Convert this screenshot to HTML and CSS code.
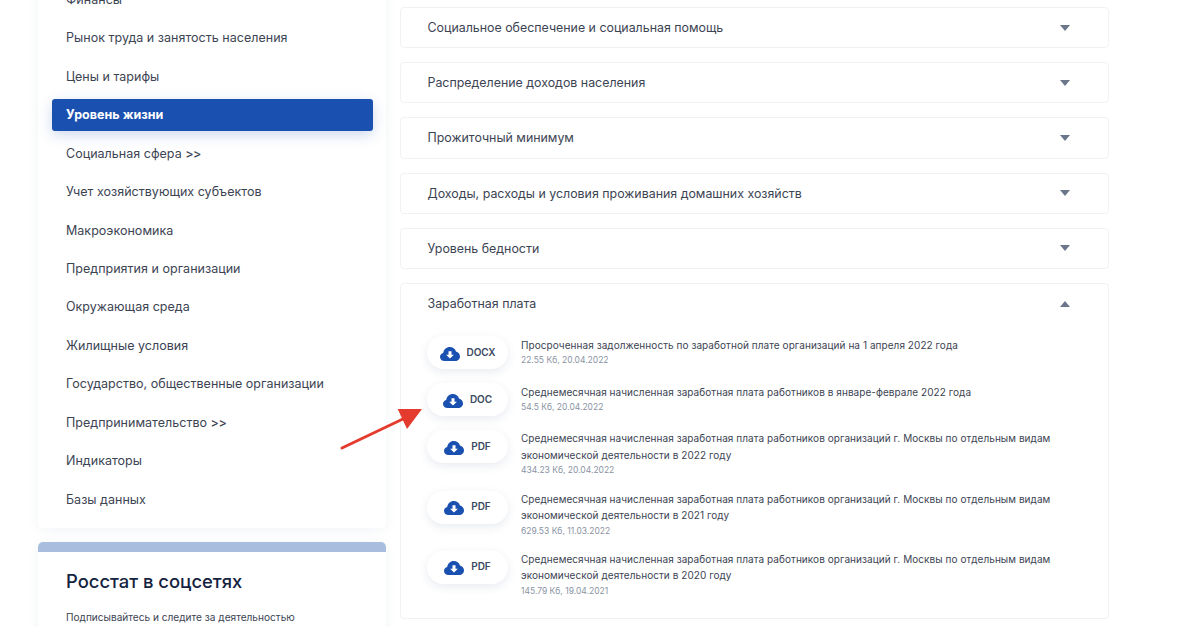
FILE: index.html
```html
<!DOCTYPE html>
<html lang="ru">
<head>
<meta charset="utf-8">
<title>Уровень жизни</title>
<link rel="stylesheet" href="styles.css">
</head>
<body>
<svg width="0" height="0" class="defs">
  <symbol id="cloud" viewBox="0 0 20 14">
    <path fill="#1a50b0" d="M4.600 14C2 14 0 12.200 0 9.900 0 8 1.300 6.500 3.200 6 3.600 2.600 6.400 0 9.800 0c2.900 0 5.300 1.800 6.200 4.400 2.300.5 4 2.600 4 5 0 2.600-2.100 4.600-4.800 4.600z"/>
    <path fill="#fff" d="M8.500 4.200h3v3.600h2.400L10 11.600 6.100 7.800h2.400z"/>
  </symbol>
</svg>
<div class="page">
  <aside class="side">
    <nav class="card menu">
      <a class="item">Финансы</a>
      <a class="item">Рынок труда и занятость населения</a>
      <a class="item">Цены и тарифы</a>
      <a class="item active">Уровень жизни</a>
      <a class="item">Социальная сфера <span class="gt">&gt;&gt;</span></a>
      <a class="item">Учет хозяйствующих субъектов</a>
      <a class="item">Макроэкономика</a>
      <a class="item">Предприятия и организации</a>
      <a class="item">Окружающая среда</a>
      <a class="item">Жилищные условия</a>
      <a class="item">Государство, общественные организации</a>
      <a class="item">Предпринимательство <span class="gt">&gt;&gt;</span></a>
      <a class="item">Индикаторы</a>
      <a class="item">Базы данных</a>
    </nav>
    <section class="card social">
      <h2 class="social-title">Росстат в соцсетях</h2>
      <p class="social-text">Подписывайтесь и следите за деятельностью</p>
    </section>
  </aside>
  <main class="main">
    <div class="acc"><div class="acc-head"><span>Социальное обеспечение и социальная помощь</span><i class="tri"></i></div></div>
    <div class="acc"><div class="acc-head"><span>Распределение доходов населения</span><i class="tri"></i></div></div>
    <div class="acc"><div class="acc-head"><span>Прожиточный минимум</span><i class="tri"></i></div></div>
    <div class="acc"><div class="acc-head"><span>Доходы, расходы и условия проживания домашних хозяйств</span><i class="tri"></i></div></div>
    <div class="acc"><div class="acc-head"><span>Уровень бедности</span><i class="tri"></i></div></div>
    <div class="acc open">
      <div class="acc-head"><span>Заработная плата</span><i class="tri up"></i></div>
      <div class="files">
        <div class="file one">
          <a class="btn"><svg class="cloud"><use href="#cloud"/></svg><b>DOCX</b></a>
          <div class="info"><div class="name">Просроченная задолженность по заработной плате организаций на 1 апреля 2022 года</div><div class="meta">22.55 Кб, 20.04.2022</div></div>
        </div>
        <div class="file one">
          <a class="btn"><svg class="cloud"><use href="#cloud"/></svg><b>DOC</b></a>
          <div class="info"><div class="name">Среднемесячная начисленная заработная плата работников в январе-феврале 2022 года</div><div class="meta">54.5 Кб, 20.04.2022</div></div>
        </div>
        <div class="file">
          <a class="btn"><svg class="cloud"><use href="#cloud"/></svg><b>PDF</b></a>
          <div class="info"><div class="name">Среднемесячная начисленная заработная плата работников организаций г. Москвы по отдельным видам экономической деятельности в 2022 году</div><div class="meta">434.23 Кб, 20.04.2022</div></div>
        </div>
        <div class="file">
          <a class="btn"><svg class="cloud"><use href="#cloud"/></svg><b>PDF</b></a>
          <div class="info"><div class="name">Среднемесячная начисленная заработная плата работников организаций г. Москвы по отдельным видам экономической деятельности в 2021 году</div><div class="meta">629.53 Кб, 11.03.2022</div></div>
        </div>
        <div class="file last">
          <a class="btn"><svg class="cloud"><use href="#cloud"/></svg><b>PDF</b></a>
          <div class="info"><div class="name">Среднемесячная начисленная заработная плата работников организаций г. Москвы по отдельным видам экономической деятельности в 2020 году</div><div class="meta">145.79 Кб, 19.04.2021</div></div>
        </div>
      </div>
    </div>
  </main>
</div>
<svg class="arrow" width="90" height="56" viewBox="0 0 90 56">
  <path d="M5 46 L68 16" stroke="#e53a2e" stroke-width="3" stroke-linecap="round" fill="none"/>
  <path d="M85 7 L60.700 7 L70 27z" fill="#e53a2e"/>
</svg>
</body>
</html>
```
FILE: styles.css
```css
* { box-sizing: border-box; }
html, body { margin: 0; height: 627px; overflow: hidden; background: #fff; }
body { font-family: Inter, "Noto Sans", sans-serif; color: #3c4453; position: relative; }
.defs { position: absolute; }
.page { display: flex; align-items: flex-start; padding-left: 38px; margin-top: -17px; }
.side { width: 348px; flex: none; display: flex; flex-direction: column; gap: 14px; }
.card { background: #fff; border-radius: 5px; box-shadow: 0 2px 12px rgba(40, 60, 110, .06); }
.menu { padding: .3px 13px 6.200px 14px; display: flex; flex-direction: column; }
.item { display: flex; align-items: center; height: 32px; margin-bottom: 6.460px; padding-left: 14px; font-size: 12.500px; letter-spacing: .02px; border-radius: 3px; white-space: pre; }
.gt { letter-spacing: -.5px; font-weight: 500; }
.item.active { background: #1a50b0; color: #fff; font-weight: 700; box-shadow: 0 4px 14px rgba(26, 80, 176, .22); }
.social { border-top: 10px solid #a9bedf; padding: 16px 28px 0; height: 200px; }
.social-title { margin: 0; font-size: 18.400px; line-height: 26px; font-weight: 500; color: #14233f; }
.social-text { margin: 16px 0 0; font-size: 10.100px; line-height: 14px; }
.main { width: 709px; margin-left: 14px; padding-top: 24px; display: flex; flex-direction: column; gap: 14px; flex: none; }
.acc { border: 1px solid #f1f2f5; border-radius: 4px; background: #fff; }
.acc-head { height: 39.200px; display: flex; align-items: center; justify-content: space-between; padding: 0 38px 0 26.500px; font-size: 12.400px; }
.tri { width: 0; height: 0; border-left: 5.500px solid transparent; border-right: 5.500px solid transparent; border-top: 6px solid #6a7689; }
.tri.up { border-top: 0; border-bottom: 6px solid #6a7689; }
.files { padding: 0 27px 19.600px 26px; margin-top: 13.200px; display: flex; flex-direction: column; }
.file { display: flex; align-items: flex-start; gap: 13px; min-height: 60.300px; }
.file.one { min-height: 47px; }
.file.last { min-height: 47px; }
.one .info { padding-top: 1px; }
.one .meta { margin-top: 0; }
.btn { width: 81px; height: 33px; flex: none; display: flex; align-items: center; justify-content: center; gap: 7px; border-radius: 17px; background: #fff; box-shadow: 0 3px 10px rgba(40, 60, 110, .1); }
.cloud { width: 20px; height: 14px; margin-top: 2px; }
.btn b { font-size: 10px; font-weight: 600; letter-spacing: -.1px; color: #3a4a60; margin-top: -2px; }
.name { font-size: 10px; line-height: 16.500px; letter-spacing: .06px; color: #3c4453; }
.meta { font-size: 8.500px; line-height: 12px; color: #8a93a3; margin-top: 1px; }
.arrow { position: absolute; left: 337px; top: 402px; }
```
